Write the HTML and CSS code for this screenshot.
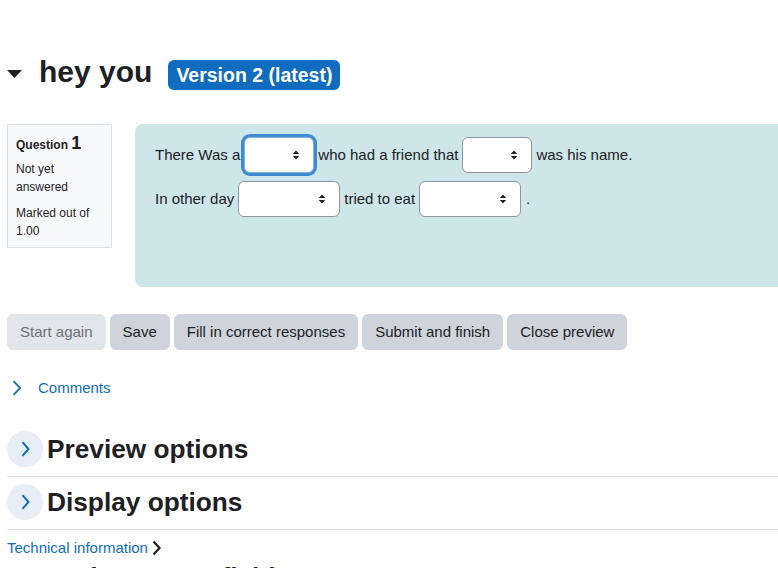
FILE: index.html
```html
<!DOCTYPE html>
<html lang="en">
<head>
<meta charset="utf-8">
<title>Preview question: hey you</title>
<link rel="stylesheet" href="styles.css">
</head>
<body>
<div class="page">
  <h2 class="title">
    <svg class="caret" width="15" height="8" viewBox="0 0 15 8"><path d="M0 0 H15 L7.5 8 Z" fill="#1d2125"/></svg>
    <span>hey you</span>
    <span class="badge">Version 2 (latest)</span>
  </h2>

  <div class="que">
    <div class="info">
      <h3 class="qno-title">Question <span class="qno">1</span></h3>
      <div class="state">Not yet answered</div>
      <div class="grade">Marked out of 1.00</div>
    </div>
    <div class="formulation">
      <div class="qline">
        <span>There Was a</span>
        <select class="sel w70 focused" aria-label="Blank 1"><option></option></select>
        <span>who had a friend that</span>
        <select class="sel w70" aria-label="Blank 2"><option></option></select>
        <span>was his name.</span>
      </div>
      <div class="qline">
        <span>In other day</span>
        <select class="sel w102" aria-label="Blank 3"><option></option></select>
        <span>tried to eat</span>
        <select class="sel w102" aria-label="Blank 4"><option></option></select>
        <span class="dot">.</span>
      </div>
    </div>
  </div>

  <div class="buttons">
    <button class="btn disabled" disabled>Start again</button>
    <button class="btn">Save</button>
    <button class="btn">Fill in correct responses</button>
    <button class="btn">Submit and finish</button>
    <button class="btn">Close preview</button>
  </div>

  <div class="comments">
    <svg class="chev-blue" width="10" height="16" viewBox="0 0 10 16"><path d="M1.5 1.2 L8 8 L1.5 14.8" fill="none" stroke="#0f6cbf" stroke-width="1.8"/></svg>
    <a class="link">Comments</a>
  </div>

  <div class="sections">
    <div class="section">
      <span class="circle"><svg width="10" height="16" viewBox="0 0 10 16"><path d="M2.5 1.2 L8.5 8 L2.5 14.8" fill="none" stroke="#0f6cbf" stroke-width="2"/></svg></span>
      <h3 class="sec-title">Preview options</h3>
    </div>
    <div class="section">
      <span class="circle"><svg width="10" height="16" viewBox="0 0 10 16"><path d="M2.5 1.2 L8.5 8 L2.5 14.8" fill="none" stroke="#0f6cbf" stroke-width="2"/></svg></span>
      <h3 class="sec-title">Display options</h3>
    </div>
  </div>

  <div class="tech">
    <a class="link">Technical information</a>
    <svg width="13" height="16" viewBox="0 0 13 16"><path d="M3.5 1.5 L9.5 8 L3.5 14.5" fill="none" stroke="#1d2125" stroke-width="2.2"/></svg>
  </div>
  <h3 class="sec-title next">Save changes to fields</h3>
</div>
</body>
</html>
```
FILE: styles.css
```css
html, body {
  margin: 0;
  padding: 0;
  overflow: hidden;
  background: #fff;
}
body {
  font-family: "Liberation Sans", Arial, sans-serif;
  font-size: 15px;
  line-height: 1.5;
  color: #1d2125;
}
.page {
  width: 790px;
  padding: 54px 0 0 7px;
  box-sizing: border-box;
}
.title {
  display: flex;
  align-items: center;
  margin: 0;
  height: 36px;
  font-size: 30px;
  line-height: 36px;
  font-weight: 700;
}
.caret {
  margin-right: 17px;
  margin-top: 3px;
}
.badge {
  margin-left: 16px;
  margin-top: 5px;
  height: 30px;
  line-height: 30px;
  padding: 0 8px;
  background: #0f6cbf;
  color: #fff;
  font-size: 19.5px;
  border-radius: 6px;
}
.que {
  display: flex;
  align-items: flex-start;
  margin-top: 34px;
}
.info {
  width: 105px;
  box-sizing: border-box;
  flex: none;
  background: #f8f9fa;
  border: 1px solid #dee2e6;
  padding: 7px 8px 7px;
  font-size: 12px;
  line-height: 18px;
}
.qno-title {
  margin: 0 0 4px;
  font-size: 12px;
  line-height: 22px;
  font-weight: 700;
}
.qno {
  font-size: 18px;
}
.state {
  margin-bottom: 8px;
}
.formulation {
  flex: 1;
  margin-left: 23px;
  background: #cee6e9;
  border-radius: 8px;
  padding: 13px 20px 0;
  height: 163px;
  box-sizing: border-box;
}
.qline {
  display: flex;
  align-items: center;
  gap: 4px;
  height: 36px;
  margin-bottom: 8px;
  white-space: nowrap;
}
.dot {
  margin-left: 1px;
}
.sel {
  appearance: none;
  -webkit-appearance: none;
  height: 36px;
  box-sizing: border-box;
  border: 1px solid #8f959e;
  border-radius: 6px;
  background-color: #fff;
  background-image: url("data:image/svg+xml,%3Csvg xmlns='http://www.w3.org/2000/svg' width='10' height='12' viewBox='0 0 10 12'%3E%3Cpath d='M1.8 5 L5 1.5 L8.2 5 Z M1.8 7 L5 10.5 L8.2 7 Z' fill='%231d2125'/%3E%3C/svg%3E");
  background-repeat: no-repeat;
  background-position: right 12px center;
  background-size: 10px 12px;
  margin: 0;
  padding: 0 12px;
  font-family: inherit;
  font-size: 15px;
  color: #1d2125;
}
.w70 { width: 70px; }
.w102 { width: 102px; }
.sel.focused {
  border-color: #7fb6df;
  box-shadow: 0 0 0 3px #3f8ad0;
  outline: none;
}
.buttons {
  display: flex;
  gap: 4px;
  margin-top: 27px;
}
.btn {
  font-family: inherit;
  font-size: 15px;
  line-height: 22px;
  height: 36px;
  padding: 6px 12px;
  border: 1px solid #ced4da;
  border-radius: 6px;
  background: #ced4da;
  color: #1d2125;
}
.btn.disabled {
  background: #e2e6ea;
  border-color: #e2e6ea;
  color: #6b7177;
}
.link {
  color: #0f6cbf;
  text-decoration: none;
}
.comments {
  display: flex;
  align-items: center;
  margin-top: 27px;
  height: 22px;
}
.chev-blue {
  margin-left: 5px;
  margin-right: 16px;
}
.sections {
  margin-top: 32px;
}
.section {
  display: flex;
  align-items: center;
  gap: 4px;
  padding-bottom: 9px;
  border-bottom: 1px solid #dee2e6;
  margin-bottom: 7px;
}
.circle {
  display: flex;
  align-items: center;
  justify-content: center;
  width: 36px;
  height: 36px;
  border-radius: 50%;
  background: #e7eef7;
}
.sec-title {
  margin: 0;
  font-size: 26.25px;
  line-height: 36px;
  font-weight: 700;
}
.tech {
  display: flex;
  align-items: center;
  gap: 2px;
  margin-top: 5px;
  height: 22px;
}
.next {
  margin-top: 0;
}
```
